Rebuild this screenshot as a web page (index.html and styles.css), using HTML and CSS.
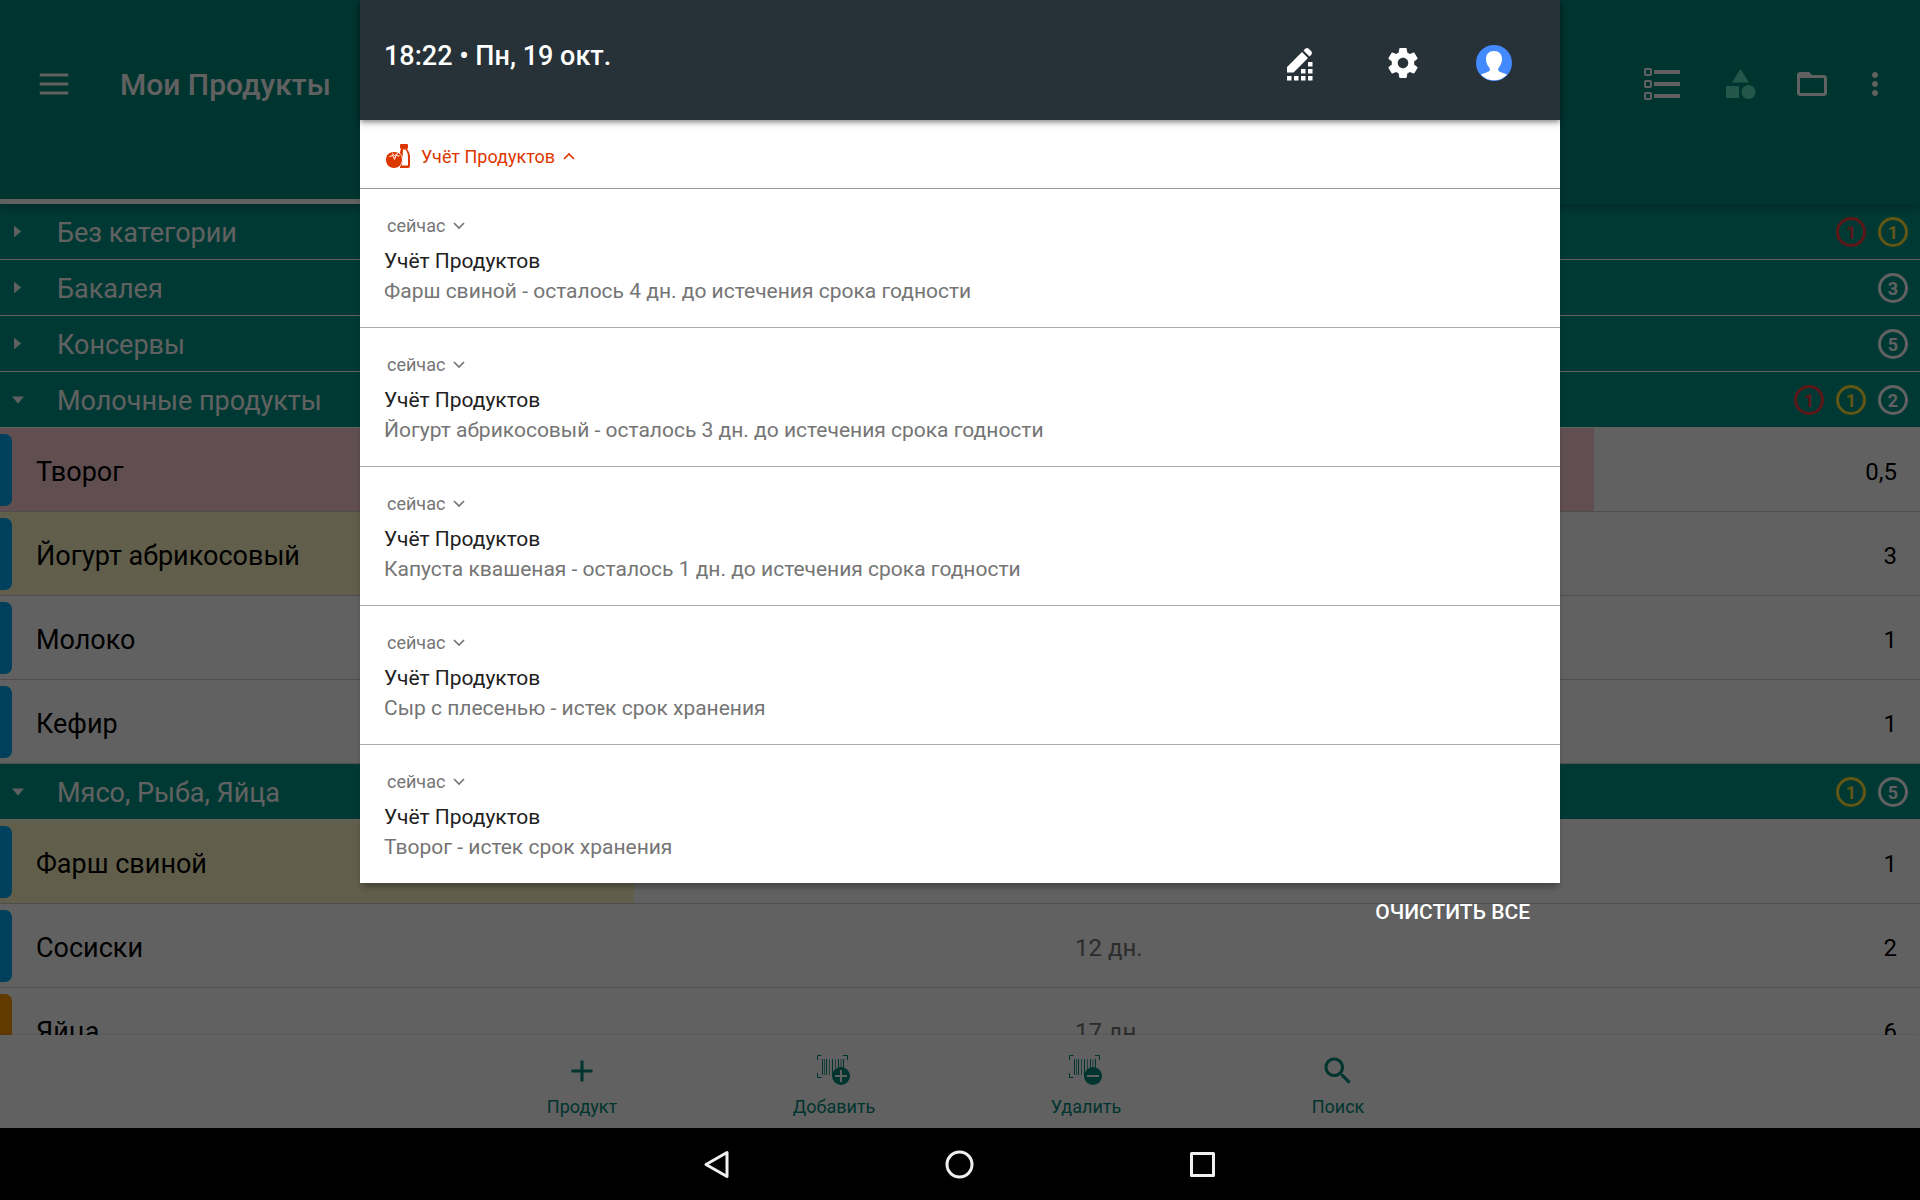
FILE: index.html
```
<!DOCTYPE html>
<html lang="ru">
<head>
    <meta charset="UTF-8">
    <meta name="viewport" content="width=device-width, initial-scale=1.0">
    <title>Мои Продукты</title>
    <link rel="stylesheet" href="styles.css">
</head>
<body>
    <div class="device">
        <!-- Приложение -->
        <div class="app">
            <header class="app-bar">
                <div class="toolbar">
                    <button class="icon-button" aria-label="Меню">
                        <svg width="36" height="36" viewBox="0 0 24 24" fill="#fff"><path d="M2.500 17h19v2h-19zM2.500 11h19v2h-19zM2.500 5h19v2h-19z"/></svg>
                    </button>
                    <h1 class="app-title">Мои Продукты</h1>
                    <button class="icon-button list-button" aria-label="Список">
                        <svg width="36" height="32" viewBox="0 0 36 32" fill="#fff">
                            <g fill="none" stroke="#fff" stroke-width="2"><rect x="1" y="1" width="6" height="6" rx="1"/><rect x="1" y="13" width="6" height="6" rx="1"/><rect x="1" y="25" width="6" height="6" rx="1"/></g>
                            <path d="M10 2h26v4H10zM10 14h26v4H10zM10 26h26v4H10z"/>
                        </svg>
                    </button>
                    <button class="icon-button shapes-button" aria-label="Категории">
                        <svg width="30" height="30" viewBox="0 0 30 30" fill="#69f0c8" opacity=".9"><path d="M14.500 0l8.500 13.500H6zM0 17h13v12H0z"/><circle cx="22.500" cy="23" r="7"/></svg>
                    </button>
                    <button class="icon-button folder-button" aria-label="Папка">
                        <svg width="36" height="36" viewBox="0 0 24 24" fill="#fff"><path d="M20 6h-8l-2-2H4c-1.100 0-1.990.9-1.990 2L2 18c0 1.100.9 2 2 2h16c1.100 0 2-.9 2-2V8c0-1.100-.9-2-2-2zm0 12H4V8h16v10z"/></svg>
                    </button>
                    <button class="icon-button more-button" aria-label="Ещё">
                        <svg width="36" height="36" viewBox="0 0 24 24" fill="#fff"><path d="M12 8c1.100 0 2-.9 2-2s-.9-2-2-2-2 .9-2 2 .9 2 2 2zm0 2c-1.100 0-2 .9-2 2s.9 2 2 2 2-.9 2-2-.9-2-2-2zm0 6c-1.100 0-2 .9-2 2s.9 2 2 2 2-.9 2-2-.9-2-2-2z"/></svg>
                    </button>
                </div>
                <div class="tab-indicator"></div>
            </header>

            <main class="product-list">
                <div class="category">
                    <span class="arrow"></span><span class="category-name">Без категории</span>
                    <span class="count expired">1</span><span class="count soon">1</span>
                </div>
                <div class="category">
                    <span class="arrow"></span><span class="category-name">Бакалея</span>
                    <span class="count">3</span>
                </div>
                <div class="category">
                    <span class="arrow"></span><span class="category-name">Консервы</span>
                    <span class="count">5</span>
                </div>
                <div class="category">
                    <span class="arrow open"></span><span class="category-name">Молочные продукты</span>
                    <span class="count expired">1</span><span class="count soon">1</span><span class="count">2</span>
                </div>
                <div class="product">
                    <div class="progress expired" style="width: 83%"></div>
                    <span class="tag"></span><span class="name">Творог</span><span class="days"></span><span class="amount">0,5</span>
                </div>
                <div class="product">
                    <div class="progress soon" style="width: 50%"></div>
                    <span class="tag"></span><span class="name">Йогурт абрикосовый</span><span class="days"></span><span class="amount">3</span>
                </div>
                <div class="product">
                    <span class="tag"></span><span class="name">Молоко</span><span class="days"></span><span class="amount">1</span>
                </div>
                <div class="product">
                    <span class="tag"></span><span class="name">Кефир</span><span class="days"></span><span class="amount">1</span>
                </div>
                <div class="category">
                    <span class="arrow open"></span><span class="category-name">Мясо, Рыба, Яйца</span>
                    <span class="count soon">1</span><span class="count">5</span>
                </div>
                <div class="product">
                    <div class="progress soon" style="width: 33%"></div>
                    <span class="tag"></span><span class="name">Фарш свиной</span><span class="days"></span><span class="amount">1</span>
                </div>
                <div class="product">
                    <span class="tag"></span><span class="name">Сосиски</span><span class="days">12 дн.</span><span class="amount">2</span>
                </div>
                <div class="product">
                    <span class="tag orange"></span><span class="name">Яйца</span><span class="days">17 дн.</span><span class="amount">6</span>
                </div>
            </main>

            <nav class="bottom-bar">
                <button class="bottom-item">
                    <svg width="36" height="36" viewBox="0 0 24 24" fill="currentColor"><path d="M19 13h-6v6h-2v-6H5v-2h6V5h2v6h6v2z"/></svg>
                    Продукт
                </button>
                <button class="bottom-item">
                    <svg width="36" height="36" viewBox="0 0 36 36" fill="none" stroke="currentColor">
                        <path d="M1.500 7V2.500h4M27 2.500h4.500V7M1.500 20v4.500h4"/>
                        <path d="M6.500 6v16M10.500 6v16M16.500 6v16M22.500 6v12M27.500 6v10"/>
                        <path d="M8.500 6v16M13.500 6v16M19.500 6v14M25 6v10" stroke-width=".7"/>
                        <circle cx="25" cy="23" r="9" fill="currentColor" stroke="none"/>
                        <path class="mark" d="M19 23h12M25 17v12" stroke-width="2"/>
                    </svg>
                    Добавить
                </button>
                <button class="bottom-item">
                    <svg width="36" height="36" viewBox="0 0 36 36" fill="none" stroke="currentColor">
                        <path d="M1.500 7V2.500h4M27 2.500h4.500V7M1.500 20v4.500h4"/>
                        <path d="M6.500 6v16M10.500 6v16M16.500 6v16M22.500 6v12M27.500 6v10"/>
                        <path d="M8.500 6v16M13.500 6v16M19.500 6v14M25 6v10" stroke-width=".7"/>
                        <circle cx="25" cy="23" r="9" fill="currentColor" stroke="none"/>
                        <path class="mark" d="M19 23h12" stroke-width="2"/>
                    </svg>
                    Удалить
                </button>
                <button class="bottom-item">
                    <svg width="36" height="36" viewBox="0 0 24 24" fill="currentColor"><path d="M15.500 14h-.79l-.28-.27C15.410 12.590 16 11.110 16 9.500 16 5.910 13.090 3 9.500 3S3 5.910 3 9.500 5.910 16 9.500 16c1.610 0 3.090-.59 4.230-1.570l.27.28v.79l5 4.990L20.490 19l-4.990-5zm-6 0C7.010 14 5 11.990 5 9.500S7.010 5 9.500 5 14 7.010 14 9.500 11.990 14 9.500 14z"/></svg>
                    Поиск
                </button>
            </nav>
        </div>

        <!-- Шторка уведомлений поверх приложения -->
        <div class="shade">
            <div class="panel">
                <div class="status-header">
                    <span class="clock">18:22 • Пн, 19 окт.</span>
                    <button class="icon-button" aria-label="Изменить">
                        <svg width="26" height="36" viewBox="0 -3 26 36" fill="#fff">
                            <path d="M0 19L15 4l6 6L6.500 24.500H0zM16.500 2.500L18.500.5q1.500-1 3 0l3 3q1 1.500 0 3l-2 2z"/>
                            <path d="M0 28h4.500v4.500H0zM7 28h4.500v4.500H7zM14 28h4.500v4.500H14zM21 28h4.500v4.500H21zM14 21h4.500v4.500H14zM21 21h4.500v4.500H21zM21 14h4.500v4.500H21z"/>
                        </svg>
                    </button>
                    <button class="icon-button settings-button" aria-label="Настройки">
                        <svg width="36" height="36" viewBox="0 0 24 24" fill="#fff"><path d="M19.430 12.980c.04-.32.07-.64.07-.98s-.03-.66-.07-.98l2.110-1.650c.19-.15.24-.42.12-.64l-2-3.460c-.12-.22-.39-.3-.61-.22l-2.490 1c-.52-.4-1.080-.73-1.690-.98l-.38-2.650C14.460 2.180 14.250 2 14 2h-4c-.25 0-.46.18-.49.42l-.38 2.650c-.61.25-1.170.59-1.690.98l-2.490-1c-.23-.09-.49 0-.61.22l-2 3.460c-.13.22-.07.49.12.64l2.110 1.650c-.04.32-.07.65-.07.98s.03.66.07.98l-2.110 1.650c-.19.15-.24.42-.12.64l2 3.460c.12.22.39.3.61.22l2.490-1c.52.4 1.080.73 1.690.98l.38 2.650c.03.24.24.42.49.42h4c.25 0 .46-.18.49-.42l.38-2.650c.61-.25 1.170-.59 1.690-.98l2.490 1c.23.09.49 0 .61-.22l2-3.460c.12-.22.07-.49-.12-.64l-2.110-1.650zM12 15.500c-1.930 0-3.500-1.570-3.500-3.500s1.570-3.500 3.500-3.500 3.500 1.570 3.500 3.500-1.570 3.500-3.500 3.500z"/></svg>
                    </button>
                    <button class="icon-button" aria-label="Пользователь">
                        <svg width="36" height="36" viewBox="0 0 36 36"><circle cx="18" cy="18" r="18" fill="#448aff"/><path fill="#fff" d="M18 6c5 0 8 3 8 8 0 4-1.500 6.500-3.500 9-1 2.500 0 3.500 3 4.500 2 .6 4 1.300 5.500 2.300a18 18 0 0 1-26 0c1.500-1 3.500-1.700 5.500-2.300 3-1 4-2 3-4.500-2-2.500-3.500-5-3.500-9 0-5 3-8 8-8z"/></svg>
                    </button>
                </div>
                <div class="group-header">
                    <svg class="app-icon" width="24" height="24" viewBox="0 0 24 24" fill="#dd3700">
                        <path d="M15 0h6q1 0 1 1v3l-1 1c2 3 3 5 3 8v9q0 2-2 2h-8V9q0-2 1-4l-1-1V1q0-1 1-1z"/>
                        <path fill="#fff" d="M17 5.500h2.500c2 3 2.500 5 2.500 8v8h-6z"/>
                        <circle cx="8" cy="16" r="9" fill="#fff"/>
                        <path d="M0 16c0-5 3-8 8-8s8 3 8 8-4 8-8 8-8-3-8-8z"/>
                        <path fill="none" stroke="#fff" d="M3.500 12.500l3.500-1 1.500 4L10 11.500l3.500.5M6 9.500l2.500 2L12 9.500"/>
                    </svg>
                    <span class="group-name">Учёт Продуктов</span>
                    <svg width="12" height="8" viewBox="0 0 12 8" fill="none" stroke="#dd3700" stroke-width="1.700"><path d="M1 7l5-5 5 5"/></svg>
                </div>
                <article class="notification">
                    <div class="time">сейчас <svg width="12" height="8" viewBox="0 0 12 8" fill="none" stroke="currentColor" stroke-width="1.700"><path d="M1 1l5 5 5-5"/></svg></div>
                    <h2>Учёт Продуктов</h2>
                    <p>Фарш свиной - осталось 4 дн. до истечения срока годности</p>
                </article>
                <article class="notification">
                    <div class="time">сейчас <svg width="12" height="8" viewBox="0 0 12 8" fill="none" stroke="currentColor" stroke-width="1.700"><path d="M1 1l5 5 5-5"/></svg></div>
                    <h2>Учёт Продуктов</h2>
                    <p>Йогурт абрикосовый - осталось 3 дн. до истечения срока годности</p>
                </article>
                <article class="notification">
                    <div class="time">сейчас <svg width="12" height="8" viewBox="0 0 12 8" fill="none" stroke="currentColor" stroke-width="1.700"><path d="M1 1l5 5 5-5"/></svg></div>
                    <h2>Учёт Продуктов</h2>
                    <p>Капуста квашеная - осталось 1 дн. до истечения срока годности</p>
                </article>
                <article class="notification">
                    <div class="time">сейчас <svg width="12" height="8" viewBox="0 0 12 8" fill="none" stroke="currentColor" stroke-width="1.700"><path d="M1 1l5 5 5-5"/></svg></div>
                    <h2>Учёт Продуктов</h2>
                    <p>Сыр с плесенью - истек срок хранения</p>
                </article>
                <article class="notification">
                    <div class="time">сейчас <svg width="12" height="8" viewBox="0 0 12 8" fill="none" stroke="currentColor" stroke-width="1.700"><path d="M1 1l5 5 5-5"/></svg></div>
                    <h2>Учёт Продуктов</h2>
                    <p>Творог - истек срок хранения</p>
                </article>
            </div>
            <button class="clear-all">ОЧИСТИТЬ ВСЕ</button>
        </div>

        <!-- Системные кнопки -->
        <div class="system-bar">
            <button class="icon-button" aria-label="Назад">
                <svg width="36" height="36" viewBox="0 0 36 36" fill="none" stroke="#f0f0f0" stroke-width="3" stroke-linejoin="round"><path d="M28 6.500v24L7 18.500z"/></svg>
            </button>
            <button class="icon-button" aria-label="Домой">
                <svg width="36" height="36" viewBox="0 0 36 36" fill="none" stroke="#f0f0f0" stroke-width="3"><circle cx="17.500" cy="18.500" r="12.500"/></svg>
            </button>
            <button class="icon-button" aria-label="Недавние">
                <svg width="36" height="36" viewBox="0 0 36 36" fill="none" stroke="#f0f0f0" stroke-width="3" stroke-linejoin="round"><path d="M6.500 7.500h22v22h-22z"/></svg>
            </button>
        </div>
    </div>
</body>
</html>
```

FILE: styles.css
```
/* Общие стили */
* {
    box-sizing: border-box;
}
body {
    margin: 0;
    font-family: Roboto, "Noto Sans", sans-serif;
    background-color: #000;
    color: #000;
}
h1, h2, p {
    margin: 0;
}
button {
    border: none;
    background: none;
    padding: 0;
    color: inherit;
    font-family: inherit;
    cursor: pointer;
}
svg {
    display: block;
    flex-shrink: 0;
}
.icon-button {
    display: flex;
}
.device {
    position: relative;
    height: 100vh;
    display: flex;
    flex-direction: column;
    overflow: hidden;
}
.app {
    flex: 1;
    min-height: 0;
    display: flex;
    flex-direction: column;
    background-color: #fff;
}

/* Верхняя панель */
.app-bar {
    position: relative;
    display: flex;
    flex-direction: column;
    height: 204px;
    flex-shrink: 0;
    background-color: #00897b;
    box-shadow: 0 4px 10px rgba(0, 0, 0, 0.25);
}
.toolbar {
    flex: 1;
    display: flex;
    align-items: center;
    padding: 0 27px 31px 36px;
}
.app-title {
    flex: 1;
    margin-left: 48px;
    font-size: 30px;
    font-weight: 500;
    color: #fff;
}
.shapes-button {
    margin-left: 46px;
}
.folder-button {
    margin-left: 38px;
}
.more-button {
    margin-left: 27px;
}
.tab-indicator {
    width: 50%;
    height: 5px;
    background-color: #fff;
}

/* Список продуктов */
.product-list {
    flex: 1;
    overflow: hidden;
}
.category {
    display: flex;
    align-items: center;
    gap: 12px;
    height: 56px;
    padding: 0 12px;
    background-color: #009688;
    border-bottom: 1px solid #fff;
    color: #fff;
}
.category-name {
    flex: 1;
    margin-left: 21px;
    padding-top: 2px;
    font-size: 27px;
}
.arrow {
    width: 12px;
    height: 12px;
    background-color: #fff;
    clip-path: polygon(17% 0, 75% 50%, 17% 100%);
}
.arrow.open {
    clip-path: polygon(0 25%, 100% 25%, 50% 83%);
}
.count {
    width: 30px;
    height: 30px;
    border: 3px solid;
    border-radius: 50%;
    font-size: 18px;
    font-weight: 700;
    line-height: 25px;
    text-align: center;
}
.count.expired {
    color: #f53d3d;
}
.count.soon {
    color: #ffe135;
}
.product {
    position: relative;
    display: flex;
    align-items: center;
    height: 84px;
    padding-right: 23px;
    border-bottom: 1px solid #ccc;
}
.progress {
    position: absolute;
    left: 0;
    top: 0;
    bottom: 0;
}
.progress.expired {
    background-color: #ffcdd2;
}
.progress.soon {
    background-color: #fff9c4;
}
.tag {
    position: relative;
    width: 12px;
    height: 72px;
    border-radius: 0 7px 7px 0;
    background-color: #03a9f4;
}
.tag.orange {
    background-color: #ff9800;
}
.name {
    position: relative;
    flex: 1;
    margin-left: 24px;
    padding-top: 5px;
    font-size: 27px;
}
.days {
    width: 740px;
    padding-top: 5px;
    font-size: 24px;
    color: #757575;
}
.amount {
    width: 82px;
    padding-top: 5px;
    font-size: 24px;
    text-align: right;
}

/* Нижняя панель */
.bottom-bar {
    position: relative;
    display: flex;
    justify-content: center;
    height: 93px;
    flex-shrink: 0;
    background-color: #fff;
    box-shadow: 0 0 2px rgba(0, 0, 0, 0.2);
}
.bottom-item {
    width: 252px;
    display: flex;
    flex-direction: column;
    align-items: center;
    gap: 6px;
    padding-top: 18px;
    font-size: 18px;
    line-height: 24px;
    color: #00897b;
}
.mark {
    stroke: #fff;
}

/* Шторка уведомлений */
.shade {
    position: absolute;
    inset: 0 0 72px;
    display: flex;
    flex-direction: column;
    align-items: center;
    background-color: rgba(0, 0, 0, 0.62);
}
.panel {
    width: 62.5%;
    background-color: #fff;
    box-shadow: 0 6px 6px -2px rgba(0, 0, 0, 0.3);
}
.status-header {
    position: relative;
    display: flex;
    height: 120px;
    padding: 45px 48px 0 24px;
    background-color: #263238;
    box-shadow: 0 2px 6px rgba(0, 0, 0, 0.5);
}
.clock {
    flex: 1;
    margin-top: -5px;
    font-size: 27px;
    font-weight: 500;
    line-height: 32px;
    color: #fff;
}
.settings-button {
    margin: 0 55px 0 72px;
}
.group-header {
    display: flex;
    align-items: center;
    height: 69px;
    padding: 4px 26px 0;
    border-bottom: 1px solid #999;
    font-size: 18px;
    color: #dd3700;
}
.group-name {
    margin: 0 8px 0 11px;
}
.notification {
    height: 139px;
    padding: 24px 24px 0;
    border-bottom: 1px solid #aaa;
}
.notification:last-child {
    border-bottom: none;
    height: 138px;
}
.time {
    display: flex;
    align-items: center;
    gap: 8px;
    margin-left: 3px;
    font-size: 18px;
    line-height: 26px;
    color: #757575;
}
.notification h2 {
    margin-top: 7px;
    font-size: 21px;
    font-weight: 400;
    line-height: 30px;
    color: #212121;
}
.notification p {
    font-size: 21px;
    line-height: 30px;
    color: #757575;
}
.clear-all {
    align-self: flex-end;
    margin: 16px 390px 0 0;
    font-size: 21px;
    font-weight: 500;
    line-height: 26px;
    color: #fff;
}

/* Системная панель */
.system-bar {
    display: flex;
    justify-content: center;
    align-items: center;
    gap: 207px;
    height: 72px;
    flex-shrink: 0;
    background-color: #000;
}
```
